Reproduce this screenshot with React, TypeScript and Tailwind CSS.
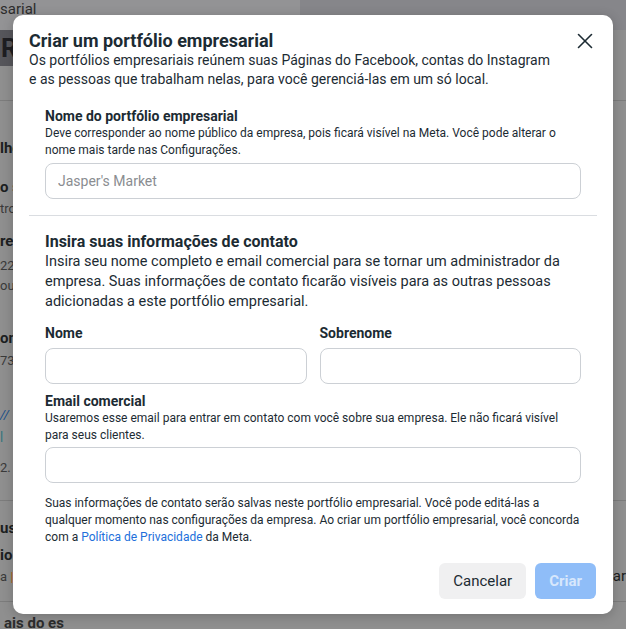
import React from 'react';
import { X } from 'lucide-react';

const font = { fontFamily: 'Roboto, "Liberation Sans", Arial, sans-serif' };

function Field({ placeholder }: { placeholder?: string }) {
  return (
    <input
      type="text"
      placeholder={placeholder}
      className="h-9 w-full rounded-lg border border-[#ccd0d5] bg-white px-3 text-sm text-[#1c2b33] outline-none placeholder:text-[#8a8d91]"
    />
  );
}

function BackdropPage() {
  return (
    <div className="flex h-[629px] w-[626px] flex-col overflow-hidden bg-[#8f8f8f] text-[#1c1e21]">
      <div className="flex h-[30px] shrink-0">
        <div className="w-[300px] bg-[#939395] pt-[1px] text-[15px] leading-[16px] text-[#2c2c2c]">sarial</div>
        <div className="flex-1 bg-[#86868a]" />
      </div>
      <div className="flex h-[36px] shrink-0">
        <div className="flex w-[40px] items-center bg-[#56565b] pl-[1px] text-[26px] font-bold text-[#1e1e22]">R</div>
        <div className="flex-1" />
      </div>
      <div className="mt-[34px] h-px shrink-0 bg-[#7c7c7c]" />
      <div className="flex flex-col text-[15px] leading-[18px]">
        <span className="mt-[38px] font-bold">lhe</span>
        <span className="mt-[21px] font-bold">o s</span>
        <span className="mt-[4px] text-[13px] text-[#3a3a3a]">tro</span>
        <span className="mt-[14px] font-bold">re</span>
        <span className="mt-[7px] text-[13px] text-[#3a3a3a]">22</span>
        <span className="mt-[2px] text-[13px] text-[#3a3a3a]">ou</span>
        <span className="mt-[34px] font-bold">on</span>
        <span className="mt-[5px] text-[13px] text-[#3a3a3a]">73</span>
        <span className="mt-[36px] text-[13px] italic text-[#1b4f8a]">//</span>
        <span className="mt-[3px] text-[13px] text-[#1b6f7a]">|</span>
        <span className="mt-[14px] text-[13px] text-[#3a3a3a]">2.</span>
      </div>
      <div className="mt-[23px] h-px shrink-0 bg-[#7c7c7c]" />
      <div className="flex">
        <div className="flex flex-col text-[15px] leading-[18px]">
          <span className="mt-[18px] font-bold">us</span>
          <span className="mt-[9px] font-bold">io</span>
          <span className="mt-[4px] text-[13px] text-[#3a3a3a]">
            a <span className="text-[#b5651d]">|</span>
          </span>
        </div>
        <div className="flex-1" />
        <div className="flex flex-col items-end text-[15px] leading-[18px]">
          <span className="mt-[66px] text-[#1c1e21]">ar</span>
        </div>
      </div>
      <div className="mt-[15px] h-px shrink-0 bg-[#7c7c7c]" />
      <div className="mt-[12px] pl-[4px] text-[15px] font-bold leading-[18px] text-[#2c2c2c]">ais do es</div>
    </div>
  );
}

export default function App() {
  return (
    <div className="relative h-[629px] w-[626px] overflow-hidden" style={font}>
      <BackdropPage />
      <div className="absolute inset-0 flex items-center justify-center">
        <div className="flex w-[600px] flex-col rounded-[10px] bg-white shadow-[0_2px_12px_rgba(0,0,0,0.2)]">
          <div className="flex items-start justify-between px-4 pt-4">
            <div>
              <h2 className="text-[18px] font-bold leading-[20px] text-[#1c2b33]">
                Criar um portfólio empresarial
              </h2>
              <p className="text-[14px] leading-[19px] text-[#1c2b33]">
                Os portfólios empresariais reúnem suas Páginas do Facebook, contas do Instagram
                <br />e as pessoas que trabalham nelas, para você gerenciá-las em um só local.
              </p>
            </div>
            <button type="button" className="-mr-[1px] -mt-[3px] grid h-[26px] w-[26px] place-items-center text-[#1c2b33]">
              <X className="h-[26px] w-[26px]" strokeWidth={1.5} />
            </button>
          </div>

          <div className="px-8 pt-[18px]">
            <p className="text-sm font-bold leading-[18px] text-[#1c2b33]">Nome do portfólio empresarial</p>
            <p className="text-xs leading-[17px] text-[#1c2b33]">
              Deve corresponder ao nome público da empresa, pois ficará visível na Meta. Você pode alterar o
              nome mais tarde nas Configurações.
            </p>
            <div className="mt-1">
              <Field placeholder="Jasper's Market" />
            </div>
          </div>

          <div className="mx-4 mt-4 h-px bg-[#dadde1]" />

          <div className="px-8 pt-4">
            <h3 className="text-base font-bold leading-[20px] text-[#1c2b33]">Insira suas informações de contato</h3>
            <p className="text-[14.5px] leading-[20px] text-[#1c2b33]">
              Insira seu nome completo e email comercial para se tornar um administrador da empresa. Suas
              informações de contato ficarão visíveis para as outras pessoas adicionadas a este portfólio
              empresarial.
            </p>

            <div className="mt-3 grid grid-cols-2 gap-[13px]">
              <div>
                <p className="text-sm font-bold leading-[18px] text-[#1c2b33]">Nome</p>
                <div className="mt-1.5">
                  <Field />
                </div>
              </div>
              <div>
                <p className="text-sm font-bold leading-[18px] text-[#1c2b33]">Sobrenome</p>
                <div className="mt-1.5">
                  <Field />
                </div>
              </div>
            </div>

            <p className="mt-2 text-sm font-bold leading-[18px] text-[#1c2b33]">Email comercial</p>
            <p className="text-xs leading-[17px] text-[#1c2b33]">
              Usaremos esse email para entrar em contato com você sobre sua empresa. Ele não ficará visível
              para seus clientes.
            </p>
            <div className="mt-[3px]">
              <Field />
            </div>

            <p className="mt-3 text-xs leading-[17px] text-[#1c2b33]">
              Suas informações de contato serão salvas neste portfólio empresarial. Você pode editá-las a
              qualquer momento nas configurações da empresa. Ao criar um portfólio empresarial, você concorda
              com a <span className="text-[#216fdb]">Política de Privacidade</span> da Meta.
            </p>
          </div>

          <div className="flex justify-end gap-[9px] pb-[15px] pl-4 pr-[17px] pt-[17px]">
            <button
              type="button"
              className="h-9 rounded-md bg-[#f0f0f1] px-[14px] text-[15px] text-[#1c2b33]"
            >
              Cancelar
            </button>
            <button
              type="button"
              className="h-9 rounded-md bg-[#8fbdf8] px-[14px] text-[15px] font-bold text-[#d7e7fc]"
            >
              Criar
            </button>
          </div>
        </div>
      </div>
    </div>
  );
}
